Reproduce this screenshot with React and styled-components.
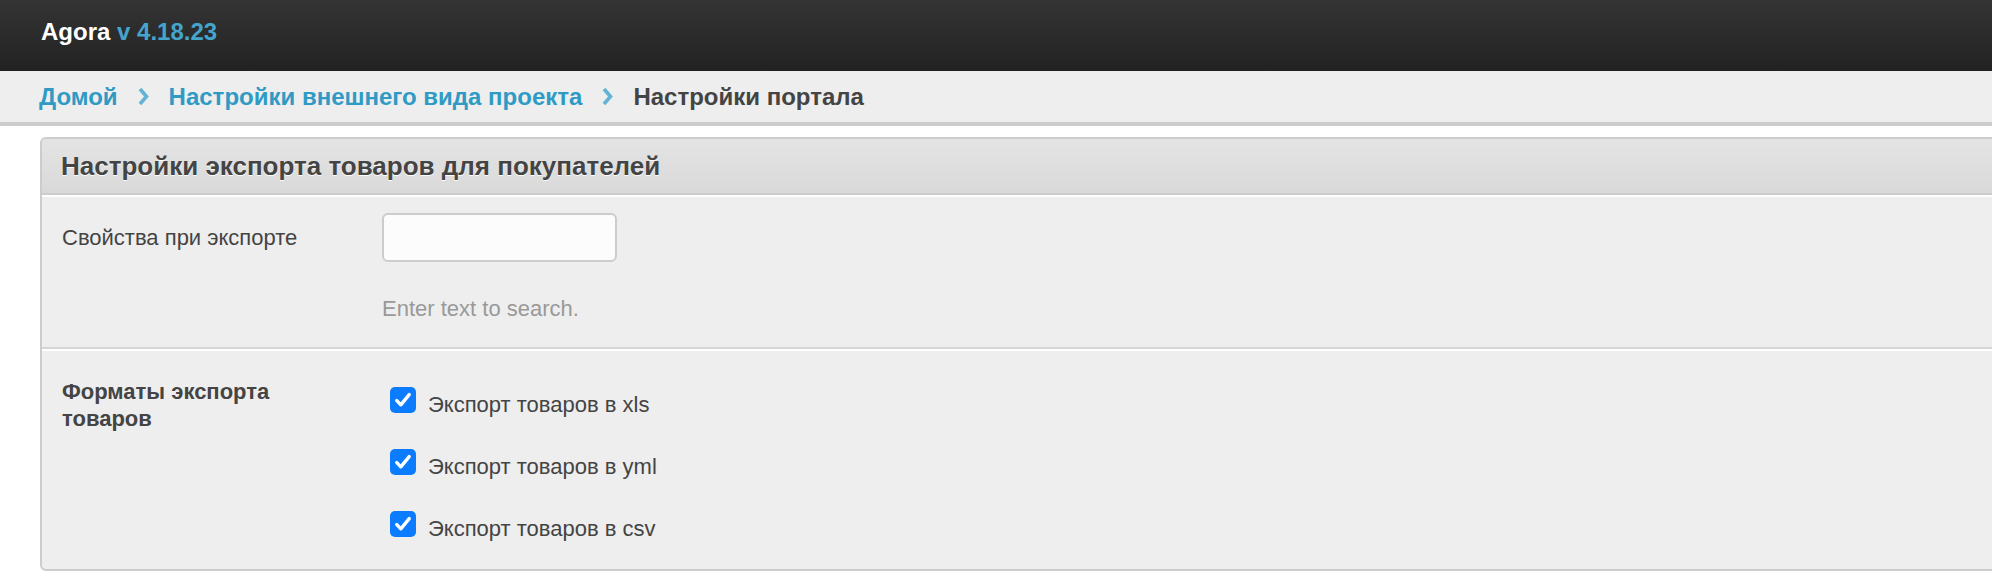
import React from 'react'
import styled, { createGlobalStyle } from 'styled-components'

const GlobalStyle = createGlobalStyle`
  body {
    margin: 0;
    background: #fff;
    font-family: "Liberation Sans", Arial, Helvetica, sans-serif;
    color: #444;
    overflow: hidden;
  }
`

const formats = [
  { id: 'xls', label: 'Экспорт товаров в xls' },
  { id: 'yml', label: 'Экспорт товаров в yml' },
  { id: 'csv', label: 'Экспорт товаров в csv' },
]

const crumbs = [
  { title: 'Домой', link: true },
  { title: 'Настройки внешнего вида проекта', link: true },
  { title: 'Настройки портала', link: false },
]

function Chevron() {
  return (
    <ChevronIcon width="11" height="19" viewBox="0 0 11 19">
      <path d="M2 2 L8.5 9.5 L2 17" fill="none" stroke="#62b4d6" strokeWidth="3.6" strokeLinejoin="miter" />
    </ChevronIcon>
  )
}

function Check({ checked }) {
  return (
    <Box $checked={checked}>
      {checked && (
        <svg width="26" height="26" viewBox="0 0 26 26">
          <path d="M6.8 13.6 L10.8 17.8 L19.2 7.6" fill="none" stroke="#fff" strokeWidth="3.4" strokeLinecap="round" strokeLinejoin="round" />
        </svg>
      )}
    </Box>
  )
}

export default function App() {
  return (
    <Page>
      <GlobalStyle />
      <TopBar>
        <Brand>
          Agora <Version>v 4.18.23</Version>
        </Brand>
      </TopBar>
      <Crumbs>
        {crumbs.map((c, i) => (
          <React.Fragment key={c.title}>
            {i > 0 && <Chevron />}
            <Crumb $link={c.link}>{c.title}</Crumb>
          </React.Fragment>
        ))}
      </Crumbs>
      <Content>
        <Panel>
          <PanelHead>Настройки экспорта товаров для покупателей</PanelHead>
          <FormRow>
            <Label>Свойства при экспорте</Label>
            <Field>
              <TextInput type="text" />
              <Help>Enter text to search.</Help>
            </Field>
          </FormRow>
          <FormRow $last>
            <Label $bold>Форматы экспорта товаров</Label>
            <Field>
              <CheckList>
                {formats.map((f) => (
                  <CheckItem key={f.id}>
                    <Check checked />
                    <CheckText>{f.label}</CheckText>
                  </CheckItem>
                ))}
              </CheckList>
            </Field>
          </FormRow>
        </Panel>
      </Content>
    </Page>
  )
}

const Page = styled.div`
  width: 100%;
  overflow: hidden;
`

const TopBar = styled.header`
  height: 71px;
  box-sizing: border-box;
  padding: 0 41px 7px;
  display: flex;
  align-items: center;
  background: linear-gradient(180deg, #343434, #222222);
`

const Brand = styled.div`
  font-size: 24px;
  font-weight: 700;
  color: #fff;
  white-space: nowrap;
`

const Version = styled.span`
  color: #44a5cc;
`

const Crumbs = styled.nav`
  height: 51px;
  display: flex;
  align-items: center;
  gap: 20px;
  padding-left: 39px;
  background: #eeeeee;
  border-bottom: 4px solid #cccccc;
`

const ChevronIcon = styled.svg`
  display: block;
  flex: none;
`

const Crumb = styled.a`
  font-size: 24px;
  font-weight: 700;
  color: ${(p) => (p.$link ? '#2f9bc5' : '#444444')};
  text-decoration: none;
  white-space: nowrap;
`

const Content = styled.main`
  padding: 11px 0 0 40px;
`

const Panel = styled.section`
  width: 2000px;
  background: #eeeeee;
  border: 2px solid #cccccc;
  border-radius: 6px;
  overflow: hidden;
`

const PanelHead = styled.h2`
  margin: 0;
  height: 54px;
  display: flex;
  align-items: center;
  padding: 0 19px;
  font-size: 26px;
  font-weight: 700;
  color: #444;
  text-shadow: 0 1px 0 #fff;
  background: linear-gradient(180deg, #e4e4e4, #d9d9d9);
  border-bottom: 2px solid #cccccc;
`

const FormRow = styled.div`
  display: grid;
  grid-template-columns: 280px 1fr;
  column-gap: 40px;
  padding: 16px 20px ${(p) => (p.$last ? '32px' : '26px')};
  border-top: 2px solid #fff;
  border-bottom: ${(p) => (p.$last ? 'none' : '2px solid #d5d5d5')};
`

const Label = styled.label`
  padding-top: 11px;
  font-size: 22px;
  line-height: 27px;
  font-weight: ${(p) => (p.$bold ? 700 : 400)};
  color: #444;
`

const Field = styled.div`
  display: flex;
  flex-direction: column;
  align-items: flex-start;
`

const TextInput = styled.input`
  box-sizing: border-box;
  width: 235px;
  height: 49px;
  margin: 0;
  border: 2px solid #cccccc;
  border-radius: 6px;
  background: #fcfcfc;
  font: inherit;
  font-size: 22px;
  outline: none;
`

const Help = styled.div`
  margin-top: 34px;
  font-size: 22px;
  line-height: 25px;
  color: #999;
`

const CheckList = styled.div`
  display: flex;
  flex-direction: column;
  gap: 36px;
  margin-top: 20px;
  padding-left: 8px;
`

const CheckItem = styled.div`
  height: 26px;
  display: flex;
  align-items: flex-start;
  gap: 12px;
`

const Box = styled.span`
  width: 26px;
  height: 26px;
  flex: none;
  border-radius: 5px;
  background: ${(p) => (p.$checked ? '#0b7bff' : '#fff')};
  border: ${(p) => (p.$checked ? 'none' : '2px solid #999')};
  box-sizing: border-box;
  display: block;
  svg {
    display: block;
  }
`

const CheckText = styled.span`
  margin-top: 4px;
  font-size: 22px;
  line-height: 27px;
  color: #444;
  white-space: nowrap;
`
